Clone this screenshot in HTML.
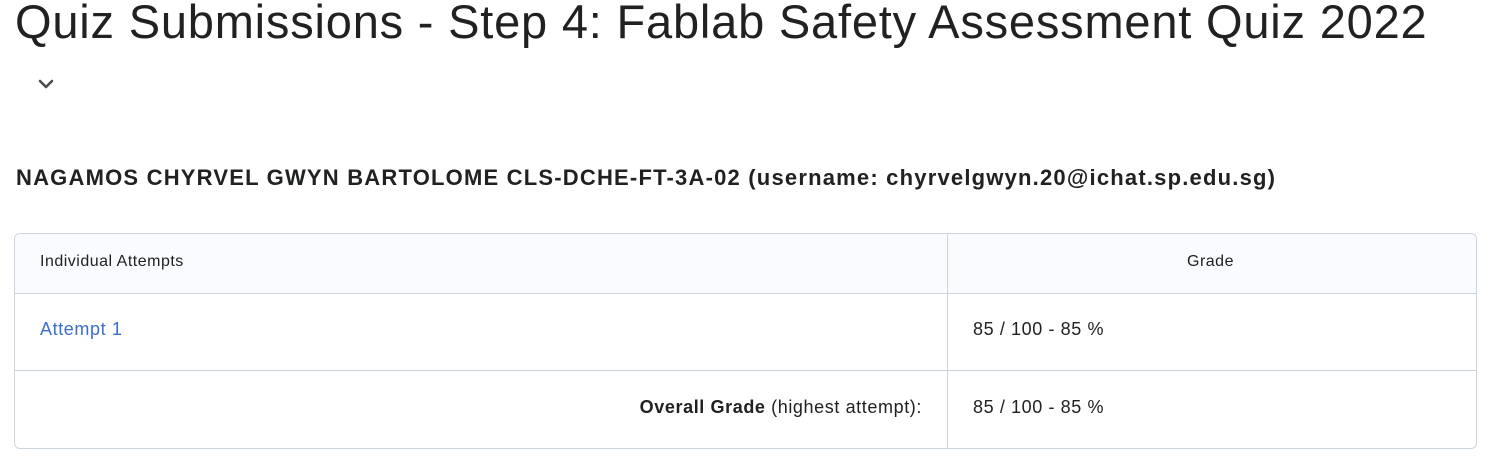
<!DOCTYPE html>
<html><head><style>
body{margin:0;background:#fff;font-family:"Liberation Sans",sans-serif;color:#202122;width:1494px;height:469px;overflow:hidden;position:relative}
h1{position:absolute;left:15px;top:-6px;margin:0;font-weight:400;font-size:47px;letter-spacing:0.8px;white-space:nowrap;color:#202122}
.chev{position:absolute;left:38px;top:78px}
h2{position:absolute;left:16px;top:165px;margin:0;font-size:22px;font-weight:700;white-space:nowrap;letter-spacing:1.2px}
.tbl{position:absolute;left:14px;top:233px;width:1461px;height:214px;border:1px solid #cdd5dc;border-radius:6px;overflow:hidden;font-size:16px}
.row{position:absolute;left:0;width:100%;border-top:1px solid #cdd5dc}
.div{position:absolute;left:932px;top:0;bottom:0;border-left:1px solid #cdd5dc}
.t{position:absolute;white-space:nowrap}
.v{font-size:18px;letter-spacing:0.6px}
</style></head><body>
<h1>Quiz Submissions - Step 4: Fablab Safety Assessment Quiz 2022</h1>
<svg class="chev" width="16" height="12" viewBox="0 0 16 12"><path d="M2 3 L8 9 L14 3" fill="none" stroke="#494c4e" stroke-width="2.6" stroke-linecap="round" stroke-linejoin="round"/></svg>
<h2>NAGAMOS CHYRVEL GWYN BARTOLOME CLS-DCHE-FT-3A-02 (username: chyrvelgwyn.20@ichat.sp.edu.sg)</h2>
<div class="tbl">
<div style="position:absolute;left:0;top:0;width:100%;height:59px;background:#f9fbff"></div>
<div class="row" style="top:59px"></div>
<div class="row" style="top:136px"></div>
<div class="div"></div>
<div class="t" style="left:25px;top:19px;font-size:16px;letter-spacing:0.5px">Individual Attempts</div>
<div class="t" style="left:1172px;top:19px;font-size:16px;letter-spacing:0.5px">Grade</div>
<div class="t v" style="left:25px;top:85px;color:#3c6ecb">Attempt 1</div>
<div class="t v" style="left:958px;top:85px">85 / 100 - 85 %</div>
<div class="t v" style="right:554px;top:163px"><b>Overall Grade</b> (highest attempt):</div>
<div class="t v" style="left:958px;top:163px">85 / 100 - 85 %</div>
</div>
</body></html>
